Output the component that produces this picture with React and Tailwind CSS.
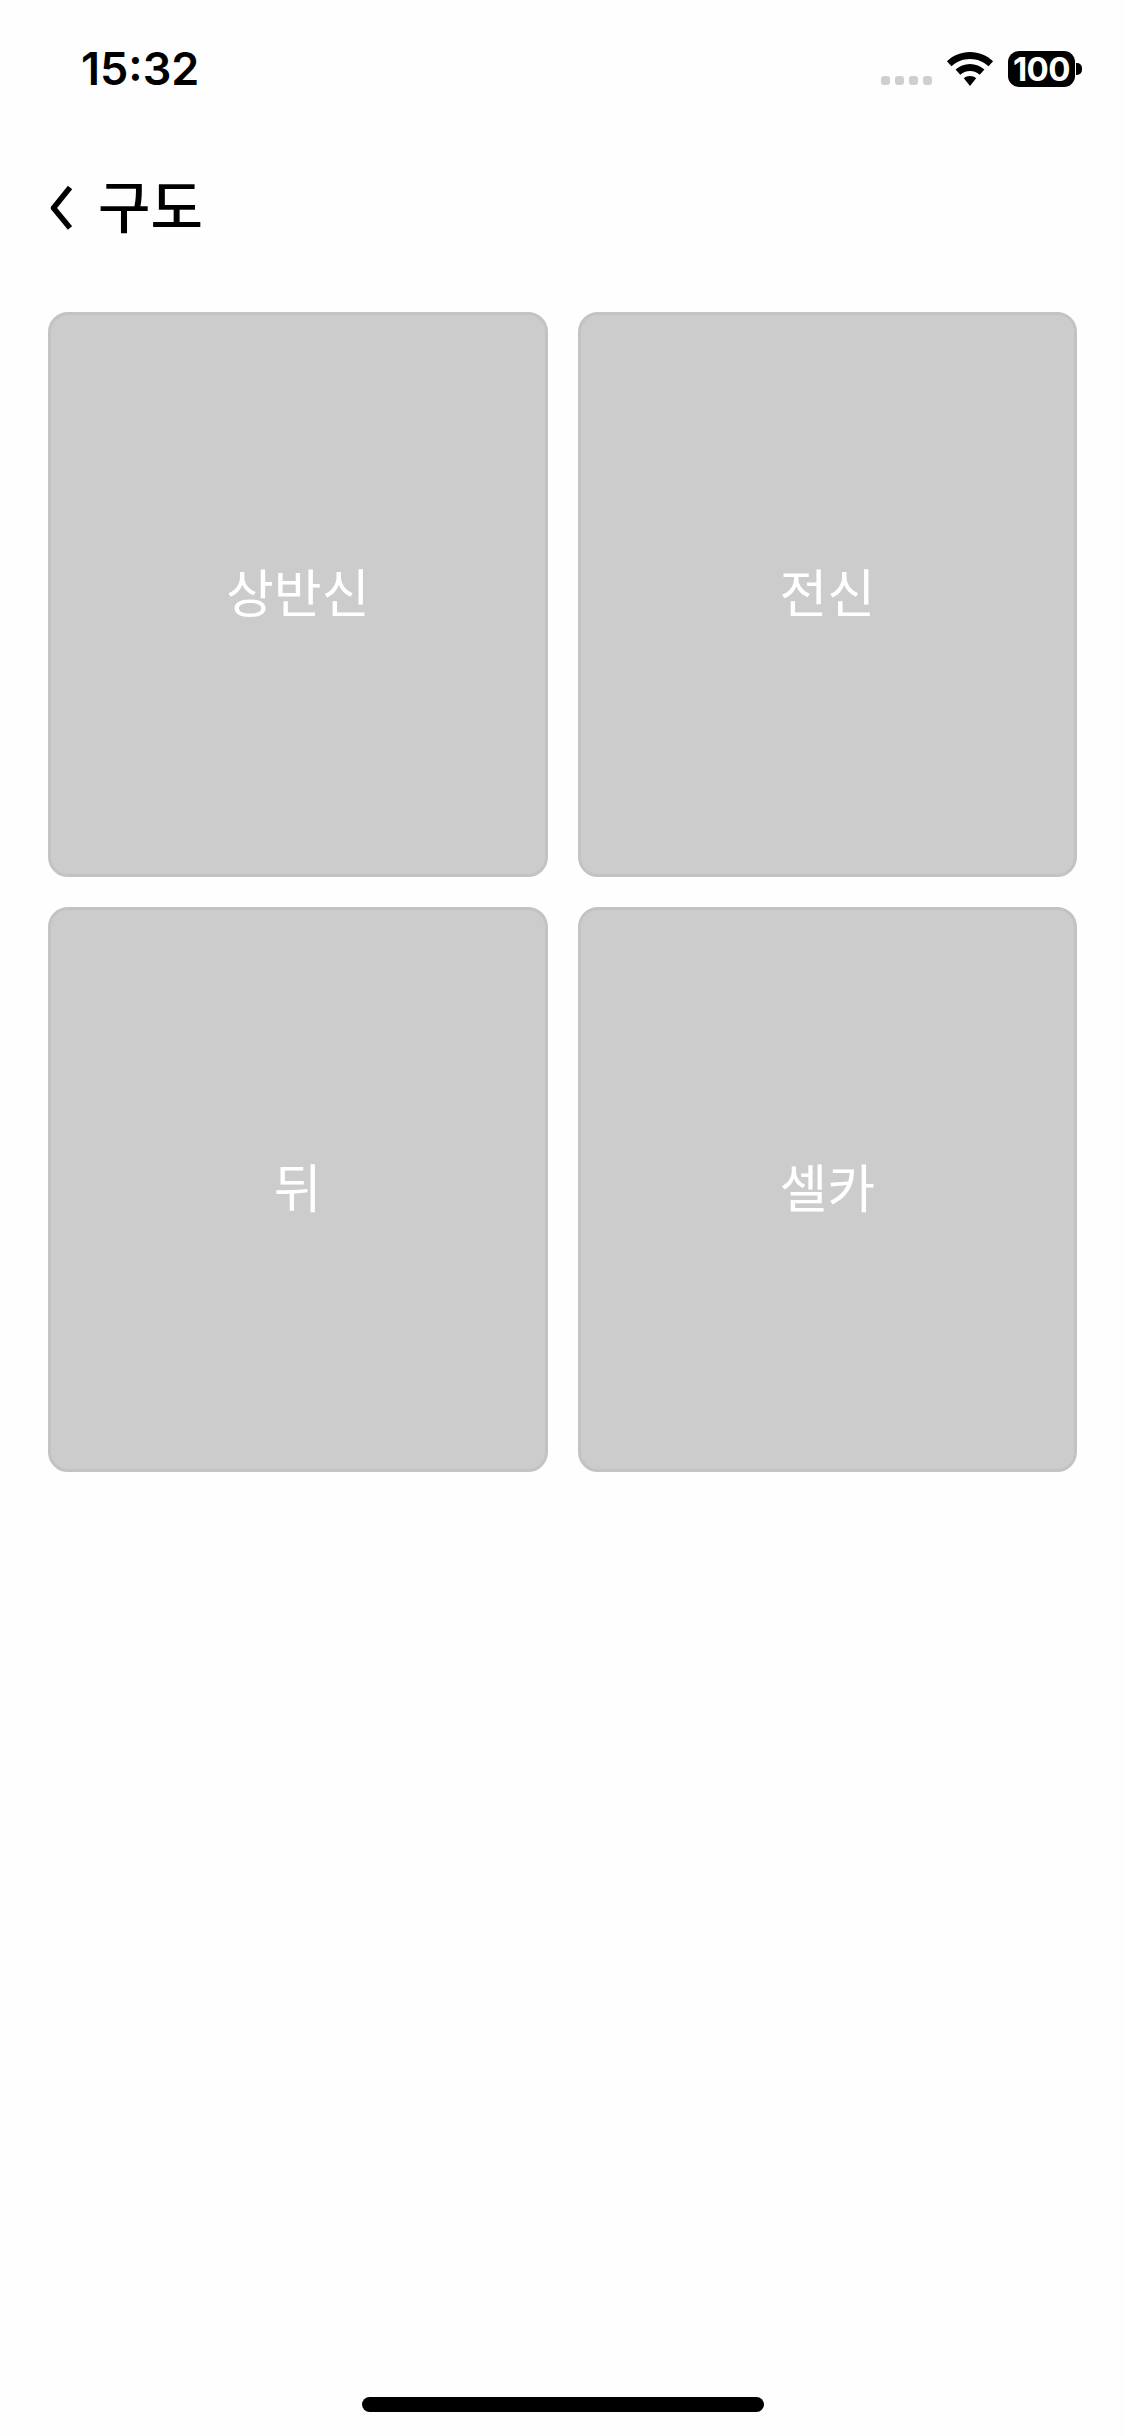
const shots = ["상반신", "전신", "뒤", "셀카"];

const sans = "font-['Inter','Noto_Sans_CJK_KR',sans-serif]";

const Wifi = () => (
  <svg width="48" height="35" viewBox="0 0 46 34" fill="#000">
    <path d="M23 0C14.3 0 6.5 3.4 0.6 8.9L5 13.8C9.7 9.4 16 6.7 23 6.7S36.3 9.4 41 13.8L45.4 8.9C39.5 3.4 31.7 0 23 0Z" />
    <path d="M23 11.6C17.6 11.6 12.7 13.7 9 17.1L13.5 22.1C16 19.8 19.3 18.4 23 18.4S30 19.8 32.5 22.1L37 17.1C33.3 13.7 28.4 11.6 23 11.6Z" />
    <path d="M23 23.2C20.7 23.2 18.6 24 17 25.5L23 33L29 25.5C27.4 24 25.3 23.2 23 23.2Z" />
  </svg>
);

const Battery = () => (
  <div className="flex items-center">
    <div className="w-[67px] h-[36px] rounded-[11px] bg-black flex items-center justify-center">
      <span className="text-white font-bold text-[33px] leading-none font-['Inter',sans-serif] tracking-[-0.5px]">100</span>
    </div>
    <div className="w-[6px] h-[12px] rounded-r-[5px] bg-black ml-[1px]" />
  </div>
);

export default function App() {
  return (
    <div className={`w-[1125px] h-[2436px] bg-[#fefefe] flex flex-col ${sans}`}>
      {/* status bar */}
      <div className="flex items-center justify-between pl-[81px] pr-[43px] pt-[47px]">
        <span className="text-[45px] leading-[44px] font-semibold text-black">15:32</span>
        <div className="flex items-center">
          <div className="flex gap-[5px] mt-[22px] mr-[14px]">
            {[0, 1, 2, 3].map((i) => (
              <div key={i} className="w-[9px] h-[9px] rounded-[3px] bg-[#cfcfcf]" />
            ))}
          </div>
          <div className="mr-[14px]">
            <Wifi />
          </div>
          <Battery />
        </div>
      </div>

      {/* header */}
      <div className="flex items-center pl-[50px] mt-[87px]">
        <svg width="22" height="44" viewBox="0 0 22 44" fill="none" stroke="#000" strokeWidth="5.5">
          <path d="M20 1.5L3.5 22L20 42" strokeLinejoin="round" />
        </svg>
        <h1 className="text-[57px] leading-[60px] font-medium text-black ml-[26px]">구도</h1>
      </div>

      {/* grid */}
      <div className="grid grid-cols-2 gap-x-[30px] gap-y-[30px] px-[48px] mt-[74px]">
        {shots.map((s) => (
          <div
            key={s}
            className="h-[565px] rounded-[20px] bg-[#cccccc] border-[3px] border-[#c3c3c3] flex items-center justify-center"
          >
            <span className="text-white text-[52px] leading-none font-normal">{s}</span>
          </div>
        ))}
      </div>

      {/* home indicator */}
      <div className="mt-auto mb-[24px] mx-auto w-[402px] h-[15px] rounded-full bg-black" />
    </div>
  );
}
